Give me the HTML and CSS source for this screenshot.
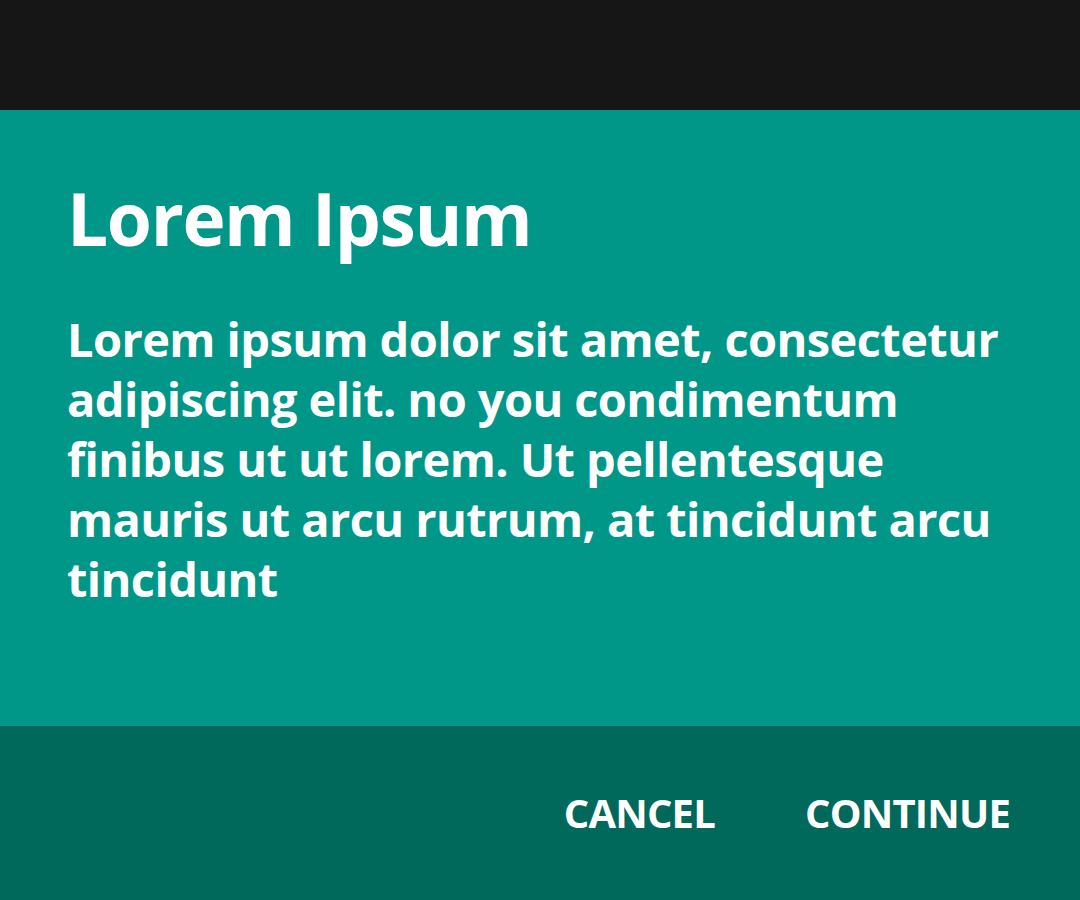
FILE: index.html
```html
<!DOCTYPE html>
<html lang="en">
<head>
<meta charset="utf-8">
<title>Dialog</title>
<link rel="stylesheet" href="styles.css">
</head>
<body>
<div class="topbar"></div>
<main class="dialog">
  <section class="content">
    <h1 class="title">Lorem Ipsum</h1>
    <p class="text">Lorem ipsum dolor sit amet, consectetur adipiscing elit. no you condimentum finibus ut ut lorem. Ut pellentesque mauris ut arcu rutrum, at tincidunt arcu tincidunt</p>
  </section>
  <footer class="actions">
    <button class="btn">CANCEL</button>
    <button class="btn">CONTINUE</button>
  </footer>
</main>
</body>
</html>
```
FILE: styles.css
```css
html, body {
  margin: 0;
  padding: 0;
}
body {
  width: 1080px;
  height: 900px;
  display: flex;
  flex-direction: column;
  font-family: "Open Sans", "Liberation Sans", sans-serif;
  color: #ffffff;
  background: #00695c;
}
.topbar {
  height: 110px;
  background: #161616;
  flex: none;
}
.dialog {
  flex: 1;
  display: flex;
  flex-direction: column;
}
.content {
  height: 616px;
  box-sizing: border-box;
  background: #009688;
  padding: 63px 50px 0 67px;
}
.title {
  margin: 0;
  font-size: 73px;
  font-weight: 700;
  line-height: 90px;
  letter-spacing: -1.4px;
}
.text {
  margin: 46px 0 0;
  font-size: 47px;
  font-weight: 700;
  line-height: 60px;
  letter-spacing: -0.6px;
}
.actions {
  flex: 1;
  display: flex;
  justify-content: flex-end;
  align-items: center;
  gap: 90px;
  padding: 0 70px 0 0;
  background: #00695c;
}
.btn {
  background: none;
  border: 0;
  padding: 0;
  color: #ffffff;
  font-family: inherit;
  font-size: 40px;
  font-weight: 700;
  line-height: 48px;
  letter-spacing: -0.8px;
}
```
